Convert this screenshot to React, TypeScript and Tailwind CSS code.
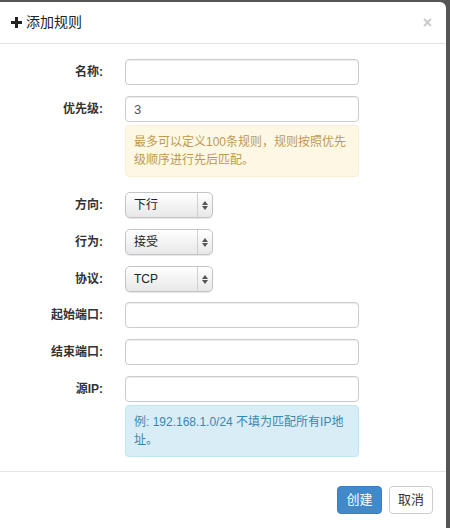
import React from "react"

const font = { fontFamily: '"Liberation Sans", "Noto Sans CJK SC", sans-serif' }

function Label({ children }: { children: React.ReactNode }) {
  return (
    <div className="w-[103px] shrink-0 text-right text-[12px] font-bold text-[#333]">
      {children}
    </div>
  )
}

function TextRow({ label, value = "" }: { label: string; value?: string }) {
  return (
    <div className="flex items-center gap-[22px]">
      <Label>{label}</Label>
      <input
        readOnly
        value={value}
        className="h-[26px] w-[234px] rounded-[4px] border border-[#ccc] bg-white px-[8px] text-[13px] text-[#555] shadow-[inset_0_1px_1px_rgba(0,0,0,0.075)] outline-none"
        style={font}
      />
    </div>
  )
}

function SelectRow({ label, value }: { label: string; value: string }) {
  return (
    <div className="flex items-center gap-[22px]">
      <Label>{label}</Label>
      <div className="flex h-[26px] w-[88px] items-stretch rounded-[5px] border border-[#c4c4c4] bg-gradient-to-b from-white to-[#e8e8e8] shadow-[0_1px_1px_rgba(0,0,0,0.1)]">
        <div className="flex flex-1 items-center pl-[8px] text-[12px] text-[#222]">{value}</div>
        <div className="flex w-[15px] flex-col items-center justify-center gap-[1px] border-l border-[#d0d0d0]">
          <svg width="6" height="4" viewBox="0 0 6 4">
            <path d="M3 0 L6 4 L0 4 Z" fill="#555" />
          </svg>
          <svg width="6" height="4" viewBox="0 0 6 4">
            <path d="M0 0 L6 0 L3 4 Z" fill="#555" />
          </svg>
        </div>
      </div>
    </div>
  )
}

export default function App() {
  return (
    <div className="h-[528px] w-[450px] overflow-hidden bg-[#555] pt-[2px]" style={font}>
      <div className="flex h-[526px] w-[446px] flex-col rounded-tr-[6px] bg-white">
        {/* Header */}
        <div className="flex h-[42px] items-center justify-between border-b border-[#e5e5e5] pl-[11px] pr-[14px]">
          <div className="flex items-center gap-[4px] text-[14px] text-[#222]">
            <svg width="11" height="11" viewBox="0 0 11 11">
              <path d="M4 0h3v4h4v3H7v4H4V7H0V4h4z" fill="#222" />
            </svg>
            <span>添加规则</span>
          </div>
          <span className="text-[16px] font-bold leading-none text-[#c8c8c8]">×</span>
        </div>

        {/* Body */}
        <div className="flex flex-1 flex-col pt-[15px]">
          <div className="flex flex-col gap-[11px]">
            <TextRow label="名称:" />
            <div className="flex flex-col gap-[3px]">
              <TextRow label="优先级:" value="3" />
              <div className="ml-[125px] w-[234px] rounded-[4px] border border-[#fbeed5] bg-[#fcf8e3] px-[8px] py-[7px] text-[12px] leading-[18px] text-[#c09853]">
                最多可以定义100条规则，规则按照优先级顺序进行先后匹配。
              </div>
            </div>
          </div>

          <div className="mt-[15px] flex flex-col gap-[11px]">
            <SelectRow label="方向:" value="下行" />
            <SelectRow label="行为:" value="接受" />
            <SelectRow label="协议:" value="TCP" />
          </div>

          <div className="mt-[10px] flex flex-col gap-[11px]">
            <TextRow label="起始端口:" />
            <TextRow label="结束端口:" />
            <div className="flex flex-col gap-[3px]">
              <TextRow label="源IP:" />
              <div className="ml-[125px] w-[234px] rounded-[4px] border border-[#bce8f1] bg-[#d9edf7] px-[8px] py-[7px] text-[12px] leading-[18px] text-[#3a87ad]">
                例: 192.168.1.0/24 不填为匹配所有IP地址。
              </div>
            </div>
          </div>
        </div>

        {/* Footer */}
        <div className="flex h-[57px] items-center justify-end gap-[7px] border-t border-[#e5e5e5] pr-[13px]">
          <button className="h-[28px] w-[45px] rounded-[4px] border border-[#3a7fbf] bg-[#4289ca] text-[13px] text-white">
            创建
          </button>
          <button className="h-[28px] w-[44px] rounded-[4px] border border-[#ccc] bg-white text-[13px] text-[#333]">
            取消
          </button>
        </div>
      </div>
    </div>
  )
}
